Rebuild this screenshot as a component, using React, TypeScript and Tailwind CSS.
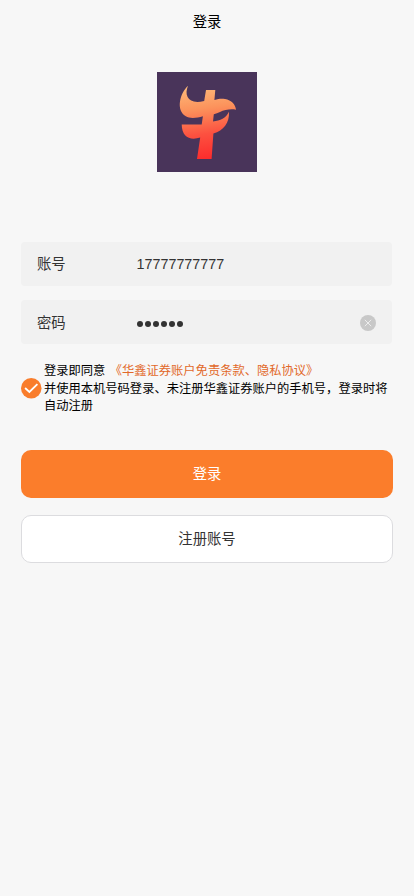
import React, { useState } from 'react';

const BullLogo: React.FC = () => (
  <svg viewBox="0 0 100 100" className="w-[100px] h-[100px] bg-[#49345a]">
    <defs>
      <linearGradient id="bull" x1="0.45" y1="0" x2="0.55" y2="1">
        <stop offset="0" stopColor="#fdb878" />
        <stop offset="0.3" stopColor="#fc935c" />
        <stop offset="0.65" stopColor="#fc5140" />
        <stop offset="1" stopColor="#fc2b2c" />
      </linearGradient>
    </defs>
    <path
      fill="url(#bull)"
      d="M31 13.7 C29.5 17.5 28.8 21.5 30.6 25 C32.8 29.2 38 31.2 47.2 29 L49 18 H58.3 L57.4 28 C62 26.6 65 26.4 68 27.1 C74.5 28.4 78.4 32.5 79 37.7 C73 36.7 67.5 38 63 40 Q60 41.4 56.8 42.3 L56 49.4 C63.5 48.4 68.8 46.3 72 39.7 C72.6 51 66.5 58.4 56.4 61.5 L54.6 87 H40 L43.2 65.6 C33 69 24.8 65 24.7 52.6 H44.7 L45.9 44.2 C40 46 33 46.8 28.8 44.3 C18.5 38 23 21 31 13.7 Z"
    />
  </svg>
);

const ClearIcon: React.FC = () => (
  <svg viewBox="0 0 16 16" className="w-4 h-4">
    <circle cx="8" cy="8" r="8" fill="#c8c8c8" />
    <path d="M4.8 4.8 L11.2 11.2 M11.2 4.8 L4.8 11.2" stroke="#ededed" strokeWidth="1" />
  </svg>
);

const CheckIcon: React.FC<{ checked: boolean }> = ({ checked }) => (
  <svg viewBox="0 0 20 20" className="w-[20.5px] h-[20.5px]">
    <circle cx="10" cy="10" r="10" fill={checked ? '#f97d2c' : '#d4d4d4'} />
    <path d="M4 9.8 L8.2 13.6 L16 6" fill="none" stroke="#fff" strokeWidth="1.8" />
  </svg>
);

const App: React.FC = () => {
  const [account, setAccount] = useState('17777777777');
  const [password, setPassword] = useState('123456');
  const [agreed, setAgreed] = useState(true);

  return (
    <div className="min-h-screen bg-[#f7f7f7] font-['Liberation_Sans','Noto_Sans_CJK_SC',sans-serif] text-[14.35px] text-[#333]">
      <header className="h-[42px] pt-[3px] flex items-center justify-center text-black">登录</header>

      <div className="flex justify-center pt-[30px]">
        <BullLogo />
      </div>

      <form className="pt-[70px] px-[21px]" onSubmit={(e) => e.preventDefault()}>
        <label className="mr-px h-11 flex items-center px-4 pt-0.5 rounded-sm bg-[#f1f1f1]">
          <span className="w-[99.5px]">账号</span>
          <input
            className="flex-1 min-w-0 bg-transparent outline-none"
            value={account}
            onChange={(e) => setAccount(e.target.value)}
          />
        </label>
        <div className="mr-px mt-3.5 h-11 flex items-center px-4 pt-[3px] rounded-sm bg-[#f1f1f1]">
          <span className="w-[99.5px]">密码</span>
          <span className="flex-1 flex items-center gap-[1.5px] pt-px">
            {password.split('').map((_, i) => (
              <span key={i} className="w-[6.5px] h-[6.5px] rounded-full bg-[#333]" />
            ))}
          </span>
          <button type="button" className="pb-px" onClick={() => setPassword('')}>
            <ClearIcon />
          </button>
        </div>

        <div className="mt-[18px] flex items-center">
          <button type="button" className="w-[23px] shrink-0 pb-px" onClick={() => setAgreed(!agreed)}>
            <CheckIcon checked={agreed} />
          </button>
          <div className="pt-px text-[12.28px] leading-[17.6px] text-black whitespace-nowrap">
            <p>
              登录即同意 <span className="ml-px text-[#e2692a]">《华鑫证券账户免责条款、隐私协议》</span>
            </p>
            <p>并使用本机号码登录、未注册华鑫证券账户的手机号，登录时将</p>
            <p>自动注册</p>
          </div>
        </div>

        <button type="submit" className="mt-[34px] block w-full h-12 pt-0.5 rounded-[10px] bg-[#fb7d2b] text-white">
          登录
        </button>
        <button type="button" className="mt-[17px] block w-full h-12 pt-0.5 rounded-[10px] border border-[#dcdcdf] bg-white">
          注册账号
        </button>
      </form>
    </div>
  );
};

export default App;
